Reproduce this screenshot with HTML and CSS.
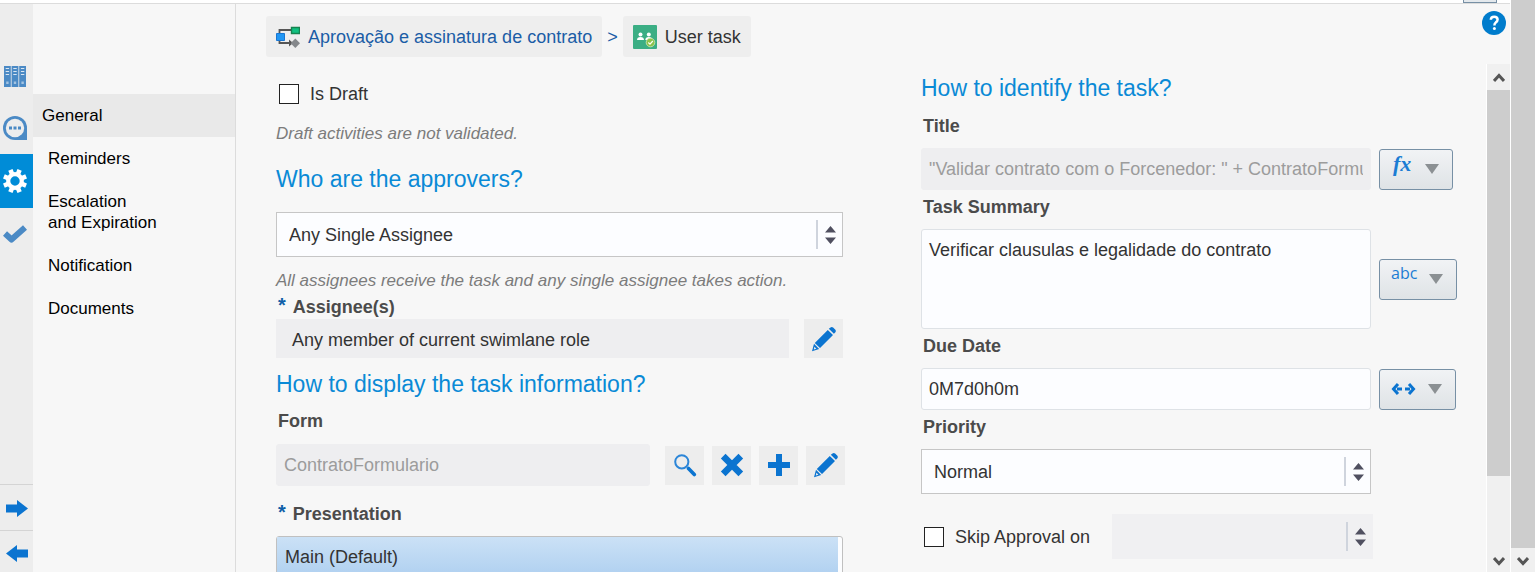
FILE: index.html
```html
<!DOCTYPE html>
<html lang="en">
<head>
<meta charset="utf-8">
<title>User task</title>
<link rel="stylesheet" href="styles.css">
</head>
<body>
<svg class="defs" aria-hidden="true">
  <symbol id="pencil" viewBox="0 0 26 26">
    <path d="M19.500 1.400q1.300-1 2.600.1l2.300 2.200q1 1.200 0 2.500l-1.500 1.600-5.100-5zM16.800 3.900l5.200 5.100L9 22l-5.200-5.100z"/>
    <path d="M3 17.800l5.200 5.200L1 25.200z"/><path class="cut" d="M3.400 20.800l2 2-2.600.8z"/>
  </symbol>
  <symbol id="sort" viewBox="0 0 11 18">
    <path d="M5.500 0L11 6.500H0zM0 11.500h11L5.500 18z"/>
  </symbol>
  <symbol id="caret" viewBox="0 0 14 10"><path d="M0 0h14L7 10z"/></symbol>
  <symbol id="chevron" viewBox="0 0 12 10"><path d="M1 8l5-5.500L11 8"/></symbol>
</svg>
<div class="window">
  <div class="app">
    <div class="topbar"><button class="topbar-button" type="button" aria-label="Menu"></button></div>
    <div class="workspace">
      <nav class="rail" aria-label="Editor sections">
        <button class="rail-item" type="button" aria-label="Data">
          <svg width="22" height="21" viewBox="0 0 22 21"><path fill="#4b8ac5" d="M0 0h6.800v21H0zM7.600 0h6.800v21H7.600zM15.200 0H22v21h-6.800z"/><path stroke="#d9e6f2" stroke-width="1.200" d="M1.700 2.500h3.400M1.700 5.500h3.400M1.700 8.500h3.400M9.300 2.500h3.400M9.300 5.500h3.400M9.300 8.500h3.400M16.900 2.500h3.400M16.900 5.500h3.400M16.900 8.500h3.400"/><path fill="#a3c3e1" d="M2.200 15.500h2.400v2.600H2.200zM9.800 15.500h2.400v2.600H9.800zM17.400 15.500h2.400v2.600h-2.400z"/></svg>
        </button>
        <button class="rail-item" type="button" aria-label="Comments">
          <svg width="24" height="24" viewBox="0 0 24 24"><path fill="#4b8ac5" d="M12 0a12 12 0 0 1 12 12v12H12A12 12 0 0 1 12 0z"/><circle cx="12" cy="12" r="9.200" fill="#ededed"/><path fill="#4b8ac5" d="M6 10.500h3v3H6zM10.500 10.500h3v3h-3zM15 10.500h3v3h-3z"/></svg>
        </button>
        <button class="rail-item rail-item-active" type="button" aria-label="Settings">
          <svg width="24" height="24" viewBox="0 0 24 24"><circle cx="12" cy="12" r="6.800" fill="none" stroke="#fff" stroke-width="4.200"/><path transform="rotate(22.500 12 12)" stroke="#fff" stroke-width="4.600" stroke-linejoin="round" d="M12 0v5M12 19v5M0 12h5M19 12h5M3.500 3.500l3.600 3.600M16.900 16.900l3.600 3.600M20.500 3.500l-3.600 3.600M7.100 16.900l-3.600 3.600"/></svg>
        </button>
        <button class="rail-item" type="button" aria-label="Validate">
          <svg width="24" height="19" viewBox="0 0 24 19"><path fill="none" stroke="#4b8ac5" stroke-width="6" stroke-linejoin="round" d="M2 8.500l6.500 6L22 2.500"/></svg>
        </button>
        <div class="rail-foot">
          <button class="rail-step" type="button" aria-label="Next"><svg width="22" height="17" viewBox="0 0 22 17"><path fill="#0b74d0" d="M0 4.500h11V0l11 8.500L11 17v-4.500H0z"/></svg></button>
          <button class="rail-step rail-step-last" type="button" aria-label="Previous"><svg width="22" height="17" viewBox="0 0 22 17"><path fill="#0b74d0" d="M22 4.500H11V0L0 8.500 11 17v-4.500h11z"/></svg></button>
        </div>
      </nav>
      <nav class="subnav" aria-label="Task settings">
        <a class="subnav-link subnav-link-active" href="#general">General</a>
        <a class="subnav-link" href="#reminders">Reminders</a>
        <a class="subnav-link" href="#escalation">Escalation<br>and Expiration</a>
        <a class="subnav-link" href="#notification">Notification</a>
        <a class="subnav-link" href="#documents">Documents</a>
      </nav>
      <main class="main">
        <header class="header">
          <div class="crumbs">
            <a class="crumb" href="#process">
              <svg width="24" height="24" viewBox="0 0 24 24"><path fill="none" stroke="#555" stroke-width="1.800" d="M16 5H3.500v13H16"/><path fill="#555" d="M13 14.500l4 3.500-4 3.500z"/><path fill="#10c080" stroke="#16834f" stroke-width="1.400" d="M15.500 2.500h8v6h-8z"/><path fill="#2196f3" stroke="#1976d2" d="M.5 8.500h8v7h-8z"/><path fill="#85888b" d="M19.300 13.500l4.700 4.700-4.700 4.700-4.700-4.700z"/></svg>
              Aprovação e assinatura de contrato
            </a>
            <span class="crumb-sep">&gt;</span>
            <span class="crumb crumb-current">
              <svg width="24" height="24" viewBox="0 0 24 24"><rect width="24" height="24" rx="1" fill="#3bae84"/><g fill="#fff"><circle cx="7.500" cy="9.500" r="2"/><circle cx="15.800" cy="9.500" r="2"/><path d="M4 15q0-3 3.500-3t3.500 3zM12.300 15q0-3 3.500-3t3.500 3z"/></g><circle cx="17.500" cy="17.500" r="4.300" fill="#8bc34a" stroke="#d2e8b8" stroke-width=".8"/><path fill="none" stroke="#fff" stroke-width="1.200" d="M15.300 17.500l1.700 1.700 2.800-3.200"/></svg>
              User task
            </span>
          </div>
          <button class="help" type="button" aria-label="Help"><svg width="24" height="24" viewBox="0 0 24 24"><circle cx="12" cy="12" r="12" fill="#007ccc"/><path fill="none" stroke="#fff" stroke-width="2.500" d="M8.800 8.800Q8.900 5.700 12.200 5.700t3.400 2.900q0 1.600-1.800 2.800-1.400 1-1.400 3.200"/><circle cx="12.400" cy="17.600" r="1.500" fill="#fff"/></svg></button>
        </header>
        <div class="scroller">
          <form class="form">
            <section class="column column-left">
              <label class="check"><input class="box" type="checkbox">Is Draft</label>
              <p class="hint hint-draft">Draft activities are not validated.</p>
              <h2 class="heading heading-approvers" id="approvers">Who are the approvers?</h2>
              <div class="picker">
                <select class="select" aria-labelledby="approvers"><option>Any Single Assignee</option></select>
                <span class="picker-mark"><svg width="11" height="18"><use href="#sort"/></svg></span>
              </div>
              <p class="hint hint-assignee">All assignees receive the task and any single assignee takes action.</p>
              <div class="label required" id="assignees">Assignee(s)</div>
              <div class="row row-assignee">
                <div class="assignee" aria-labelledby="assignees">Any member of current swimlane role</div>
                <button class="tool" type="button" aria-label="Edit assignees"><svg width="26" height="26"><use href="#pencil"/></svg></button>
              </div>
              <h2 class="heading heading-display">How to display the task information?</h2>
              <label class="label label-form" for="form-name">Form</label>
              <div class="row row-form">
                <input class="input input-off" id="form-name" type="text" value="ContratoFormulario" disabled>
                <div class="tools">
                  <button class="tool" type="button" aria-label="Search"><svg width="24" height="24" viewBox="0 0 24 24"><circle cx="8.800" cy="8.800" r="6.600" fill="none" stroke="#2c86d8" stroke-width="2"/><path stroke="#0b74d0" stroke-width="3.600" stroke-linecap="round" d="M15.500 15.500l5.800 6"/></svg></button>
                  <button class="tool" type="button" aria-label="Remove"><svg width="24" height="24" viewBox="0 0 24 24"><path fill="none" stroke="#0b74d0" stroke-width="6.600" d="M3.200 3.200l17.600 17.600M20.800 3.200L3.200 20.800"/></svg></button>
                  <button class="tool" type="button" aria-label="Add"><svg width="22" height="22" viewBox="0 0 22 22"><path d="M8 0h6v8h8v6h-8v8H8v-8H0V8h8z"/></svg></button>
                  <button class="tool" type="button" aria-label="Edit form"><svg width="26" height="26"><use href="#pencil"/></svg></button>
                </div>
              </div>
              <div class="label label-presentation required" id="presentation">Presentation</div>
              <ul class="list" role="listbox" aria-labelledby="presentation"><li class="list-item" role="option" aria-selected="true">Main (Default)</li></ul>
            </section>
            <section class="column column-right">
              <h2 class="heading">How to identify the task?</h2>
              <label class="label label-title" for="title">Title</label>
              <div class="entry">
                <input class="input input-off" id="title" type="text" value="&quot;Validar contrato com o Forcenedor: &quot; + ContratoFormulario.nome" disabled>
                <button class="mode mode-fx" type="button"><span class="fx">fx</span><svg class="caret" width="14" height="10"><use href="#caret"/></svg></button>
              </div>
              <label class="label" for="summary">Task Summary</label>
              <div class="entry">
                <textarea class="input area" id="summary">Verificar clausulas e legalidade do contrato</textarea>
                <button class="mode" type="button"><span class="abc">abc</span><svg class="caret" width="14" height="10"><use href="#caret"/></svg></button>
              </div>
              <label class="label" for="due">Due Date</label>
              <div class="entry">
                <input class="input" id="due" type="text" value="0M7d0h0m">
                <button class="mode" type="button" aria-label="Value type"><svg width="25" height="12" viewBox="0 0 25 12"><path fill="none" stroke="#0b74d0" stroke-width="3" d="M7 1L2.500 6 7 11M18 1l4.500 5-4.500 5M6 6h5M14 6h5"/></svg><svg class="caret" width="14" height="10"><use href="#caret"/></svg></button>
              </div>
              <label class="label" for="priority">Priority</label>
              <div class="entry">
                <div class="picker">
                  <select class="select" id="priority"><option>Normal</option></select>
                  <span class="picker-mark"><svg width="11" height="18"><use href="#sort"/></svg></span>
                </div>
              </div>
              <div class="entry skip">
                <label class="check"><input class="box" type="checkbox">Skip Approval on</label>
                <div class="picker">
                  <select class="select select-off" aria-label="Skip approval condition" disabled><option></option></select>
                  <span class="picker-mark"><svg width="11" height="18"><use href="#sort"/></svg></span>
                </div>
              </div>
            </section>
          </form>
          <div class="scrollbar" aria-hidden="true">
            <svg class="arrow" width="12" height="10"><use href="#chevron"/></svg>
            <div class="thumb"></div>
            <svg class="arrow arrow-down" width="12" height="10"><use href="#chevron"/></svg>
          </div>
        </div>
      </main>
    </div>
  </div>
  <div class="scrollbar scrollbar-page" aria-hidden="true">
    <div class="thumb"></div>
    <svg class="arrow arrow-down" width="12" height="10"><use href="#chevron"/></svg>
  </div>
</div>
</body>
</html>
```
FILE: styles.css
```css
* { box-sizing: border-box; }

body {
  margin: 0;
  background: #f7f7f7;
  color: #333;
  font: 18px/20px "Liberation Sans", Arial, sans-serif;
}

button, input, select, textarea {
  margin: 0;
  font: inherit;
  color: inherit;
}

button { padding: 0; border: 0; background: none; }
svg { display: block; flex: none; }
.defs { position: absolute; width: 0; height: 0; }

.window { display: flex; height: 100vh; overflow: hidden; }
.app { flex: 1; display: flex; flex-direction: column; min-width: 0; }

.topbar {
  flex: none;
  display: flex;
  justify-content: flex-end;
  height: 4px;
  padding-right: 13px;
  background: #fff;
  border-bottom: 1px solid #dcdcdc;
}
.topbar-button {
  width: 34px;
  height: 3px;
  background: #e4e9ed;
  border: 1px solid #7790a5;
  border-top: 0;
}

.workspace { flex: 1; display: flex; min-height: 0; }

/* Icon rail */
.rail {
  flex: none;
  display: flex;
  flex-direction: column;
  width: 33px;
  padding-top: 46px;
  background: #ededed;
}
.rail-item {
  display: flex;
  align-items: center;
  justify-content: center;
  height: 52px;
  padding-right: 3px;
}
.rail-item-active { height: 54px; background: #008cd7; }
.rail-foot { margin-top: auto; display: flex; flex-direction: column; }
.rail-step {
  display: flex;
  height: 46px;
  padding: 15px 0 0 6px;
  border-top: 1px solid #d4d4d4;
}
.rail-step-last { height: 42px; padding-top: 14px; }

/* Section links */
.subnav {
  flex: none;
  width: 203px;
  padding-top: 90px;
  border-right: 1px solid #dcdcdc;
}
.subnav-link {
  display: block;
  padding: 11px 8px 11px 15px;
  color: #000;
  font-size: 17px;
  line-height: 21px;
  text-decoration: none;
}
.subnav-link-active { padding-left: 9px; background: #e9e9e9; }

.main { flex: 1; display: flex; flex-direction: column; min-width: 0; }

.header {
  flex: none;
  display: flex;
  justify-content: space-between;
  align-items: flex-start;
  height: 60px;
  padding: 7px 4px 0 30px;
}
.crumbs { display: flex; align-items: center; gap: 5px; padding-top: 5px; }
.crumb {
  display: flex;
  align-items: center;
  gap: 8px;
  height: 41px;
  padding: 0 10px;
  border-radius: 3px;
  background: #eee;
  color: #1b5da6;
  text-decoration: none;
}
.crumb-current { color: #333; }
.crumb-sep { color: #1b5da6; }

.scroller { flex: 1; display: flex; min-height: 0; }
.form {
  flex: 1;
  display: grid;
  grid-template-columns: 569fr 536fr;
  align-items: start;
  gap: 76px;
  min-width: 0;
  padding: 0 29px 0 40px;
  overflow: hidden;
}
.column { display: flex; flex-direction: column; min-width: 0; }
.column-left { padding-top: 20px; }
.column-right { padding-top: 10px; }

.heading {
  margin: 0;
  color: #0a8ad6;
  font-size: 23px;
  font-weight: 400;
  line-height: 28px;
}
.heading-approvers { margin-top: 21px; }
.heading-display { margin-top: 12px; }

.hint {
  margin: 0;
  color: #7c7c7c;
  font-size: 17px;
  font-style: italic;
  white-space: nowrap;
}
.hint-draft { margin-top: 20px; }
.hint-assignee { margin-top: 14px; }

.label {
  margin: 7px 0 12px;
  padding-left: 2px;
  color: #4b4b4b;
  font-weight: 700;
}
.label-title { margin-top: 14px; }
.label-form { margin: 13px 0; }
.required { display: flex; gap: 7px; margin: 6px 0 2px; }
.required::before { content: "*"; color: #0f5fa8; font-size: 20px; line-height: 16px; }
.label-presentation { margin: 18px 0 12px; }

.check { display: flex; align-items: center; gap: 11px; padding-left: 3px; white-space: nowrap; }
.box {
  appearance: none;
  width: 20px;
  height: 20px;
  background: #fff;
  border: 1px solid #222;
}

.picker { position: relative; flex: 1; min-width: 0; }
.column-left > .picker { flex: none; margin: 19px 2px 0 0; }
.select {
  display: block;
  appearance: none;
  width: 100%;
  height: 45px;
  padding: 0 40px 0 12px;
  background: #fcfdff;
  border: 1px solid #c6c6c6;
  border-radius: 0;
}
.select-off { background: #eeeef0; border-color: #eeeef0; }
.picker-mark {
  position: absolute;
  top: 8px;
  right: 7px;
  display: flex;
  align-items: center;
  height: 29px;
  padding-left: 7px;
  border-left: 2px solid #cfd4dd;
  fill: #505060;
  pointer-events: none;
}

.input {
  flex: 1;
  min-width: 0;
  height: 42px;
  padding: 1px 7px 0;
  background: #fcfdff;
  border: 1px solid #dee2e6;
  border-radius: 3px;
}
.input-off { background: #eeeef0; border-color: #eeeef0; color: #9c9c9c; }
.area { height: 100px; padding-top: 10px; resize: none; overflow: hidden; }

.row { display: flex; gap: 15px; }
.row-assignee { padding-right: 2px; }
.row-form { align-items: center; }
.assignee { flex: 1; padding: 11px 16px 8px; background: #eeeef0; }
.tools { display: flex; gap: 8px; }
.tool {
  display: flex;
  align-items: center;
  justify-content: center;
  width: 39px;
  height: 39px;
  background: #ededed;
  fill: #0b74d0;
}
.cut { fill: #ededed; }

.list {
  margin: 0 2px 0 0;
  padding: 0 4px 0 0;
  list-style: none;
  background: #fcfdff;
  border: 1px solid #c0c0c0;
  border-radius: 3px;
}
.list-item {
  padding: 10px 8px;
  background: linear-gradient(#cbe1f6, #afd0f0);
}

.entry {
  display: grid;
  grid-template-columns: minmax(0, 1fr) 78px;
  align-items: center;
  gap: 8px;
}
.mode {
  justify-self: start;
  display: flex;
  align-items: center;
  gap: 12px;
  height: 41px;
  padding: 0 13px 0 11px;
  border: 1px solid #7790a5;
  border-radius: 3px;
  background: linear-gradient(#f1f3f5, #dfe3e6);
  color: #1b7dd4;
}
.mode-fx { gap: 14px; }
.caret { fill: #8b9093; }
.fx { padding: 0 0 10px 2px; font: italic 700 22px/20px "Liberation Serif", serif; }
.abc { padding-bottom: 12px; font: 16px/20px "Open Sans", sans-serif; }

.skip { grid-template-columns: 170px minmax(0, 261px); gap: 21px; margin-top: 20px; }

/* Scroll bars */
.scrollbar {
  flex: none;
  display: flex;
  flex-direction: column;
  width: 24px;
  background: #f0f0f0;
  border-left: 1px solid #fff;
}
.scrollbar-page { width: 26px; border-right: 1px solid #fff; }
.thumb { flex: 0 0 76%; background: #cdcdcd; }
.scrollbar-page .thumb { flex: 1; }
.arrow {
  margin: 9px auto 7px;
  fill: none;
  stroke: #555;
  stroke-width: 3;
}
.arrow-down { margin: auto auto 6px; transform: rotate(180deg); }
.scrollbar-page .arrow-down { margin-top: 8px; }
```
